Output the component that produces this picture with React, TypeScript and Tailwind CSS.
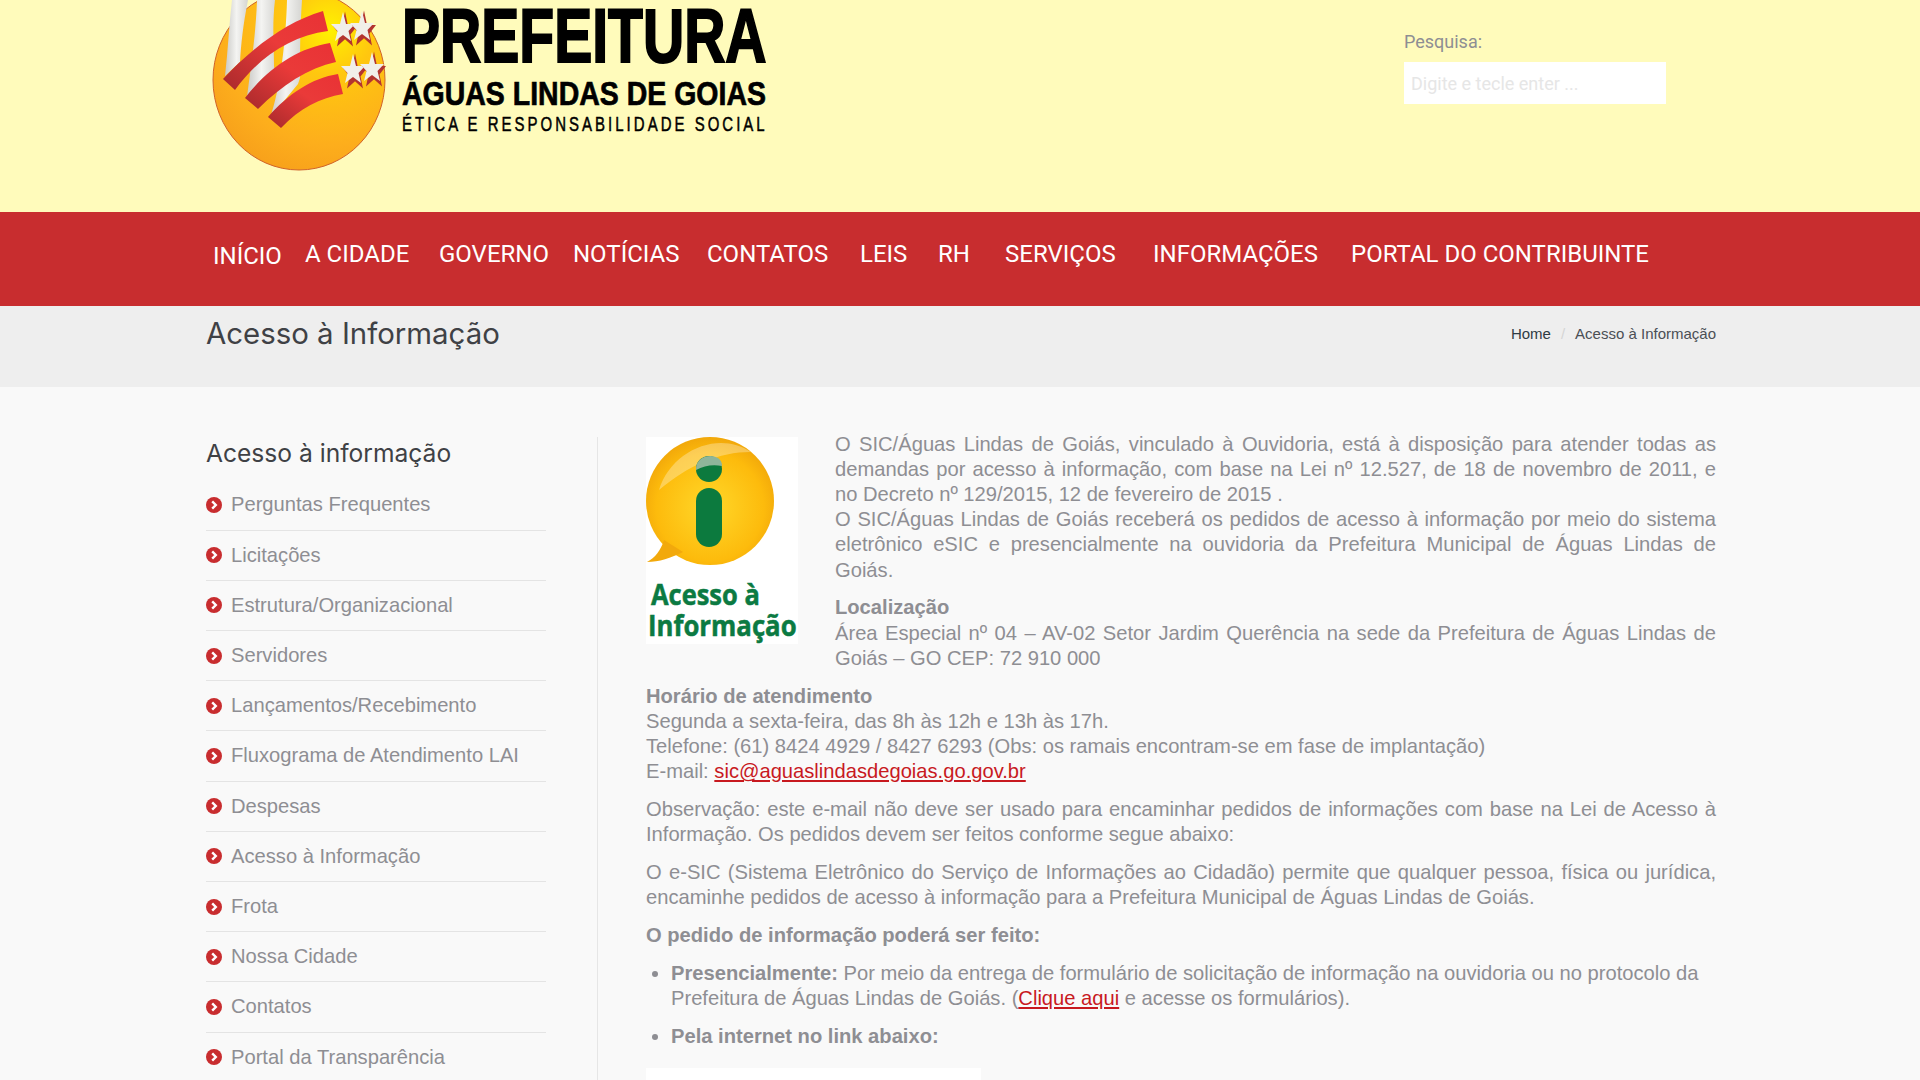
const NAV_ITEMS = [
  { label: 'INÍCIO', className: 'w-[92px] mt-[2px]' },
  { label: 'A CIDADE', className: 'w-[134px]' },
  { label: 'GOVERNO', className: 'w-[134px]' },
  { label: 'NOTÍCIAS', className: 'w-[134px]' },
  { label: 'CONTATOS', className: 'w-[153px]' },
  { label: 'LEIS', className: 'w-[78px]' },
  { label: 'RH', className: 'w-[67px]' },
  { label: 'SERVIÇOS', className: 'w-[148px]' },
  { label: 'INFORMAÇÕES', className: 'w-[198px]' },
  { label: 'PORTAL DO CONTRIBUINTE', className: '' },
];

const SIDE_ITEMS = [
  'Perguntas Frequentes',
  'Licitações',
  'Estrutura/Organizacional',
  'Servidores',
  'Lançamentos/Recebimento',
  'Fluxograma de Atendimento LAI',
  'Despesas',
  'Acesso à Informação',
  'Frota',
  'Nossa Cidade',
  'Contatos',
  'Portal da Transparência',
];

function Star({ x, y }: { x: number; y: number }) {
  const points = '0,-17 3,-5 12,-5 5.5,2 8,12 0,6 -8,12 -5.5,2 -12,-5 -3,-5';
  return (
    <g transform={`translate(${x} ${y})`}>
      <polygon points={points} fill="#b3342f" transform="translate(2 3) scale(1 1.2)" />
      <polygon points={points} fill="#f1efe9" />
    </g>
  );
}

function Logo() {
  return (
    <svg width="580" height="180" viewBox="200 0 580 180" className="block">
      <defs>
        <radialGradient id="ball" cx="0.68" cy="0.22" r="0.85">
          <stop offset="0" stopColor="#fff200" />
          <stop offset="0.3" stopColor="#ffc70f" />
          <stop offset="0.75" stopColor="#fdae1c" />
          <stop offset="1" stopColor="#f7a01b" />
        </radialGradient>
        <linearGradient id="band" x1="0" y1="1" x2="1" y2="0">
          <stop offset="0" stopColor="#a82a2c" />
          <stop offset="0.55" stopColor="#ea3a39" />
          <stop offset="1" stopColor="#e93235" />
        </linearGradient>
        <linearGradient id="silver" x1="0" y1="0" x2="1" y2="0">
          <stop offset="0" stopColor="#c9c9c6" />
          <stop offset="0.5" stopColor="#f4f4f2" />
          <stop offset="1" stopColor="#d5d5d2" />
        </linearGradient>
      </defs>
      <ellipse cx="299" cy="80" rx="86" ry="90" fill="url(#ball)" stroke="#d0632a" strokeWidth="1" />
      <path d="M225 76 C228 50 229 25 232 0 L248 0 C243 25 241 45 240 62 Z" fill="url(#silver)" />
      <path d="M247 97 C252 60 256 30 257 0 L275 0 C272 25 274 45 274 66 L276 80 Z" fill="url(#silver)" />
      <path d="M270 118 C280 90 286 40 287 0 L302 0 C300 30 300 55 300 78 L298 84 Z" fill="url(#silver)" />
      <path d="M223 79 C250 50 285 22 323 11 L328 31 C290 36 258 58 235 90 Z" fill="url(#band)" />
      <path d="M245 98 C268 68 298 48 330 43 L336 62 C308 68 282 85 258 109 Z" fill="url(#band)" />
      <path d="M268 117 C288 94 312 78 338 74 L343 94 C320 98 300 108 281 128 Z" fill="url(#band)" />
      <Star x={343} y={29} />
      <Star x={362} y={28} />
      <Star x={353} y={71} />
      <Star x={372} y={69} />
      <g fill="#000" stroke="#000" fontFamily="'Liberation Sans', sans-serif" fontWeight="700">
        <text transform="translate(402 62) scale(0.751 1)" fontSize="76" strokeWidth="2">
          PREFEITURA
        </text>
        <text transform="translate(402 105) scale(0.838 1)" fontSize="34" strokeWidth="0.7">
          ÁGUAS LINDAS DE GOIAS
        </text>
        <text transform="translate(402 131) scale(0.72 1)" fontSize="20.8" letterSpacing="4.2" fontWeight="400" strokeWidth="0.5">
          ÉTICA E RESPONSABILIDADE SOCIAL
        </text>
      </g>
    </svg>
  );
}

function InfoBadge() {
  return (
    <svg width="152" height="207" viewBox="647 437 152 207" className="block bg-white">
      <defs>
        <radialGradient id="bubble" cx="0.5" cy="0.55" r="0.6">
          <stop offset="0" stopColor="#ffd82a" />
          <stop offset="0.7" stopColor="#fdbb0c" />
          <stop offset="1" stopColor="#eda009" />
        </radialGradient>
      </defs>
      <circle cx="711" cy="501" r="64" fill="url(#bubble)" />
      <path d="M665 540 C662 550 656 558 648 562 C660 562 672 558 684 552 Z" fill="#f2a90c" />
      <path d="M660 490 C672 450 720 430 752 452 C720 452 690 465 660 490 Z" fill="#fff" opacity="0.3" />
      <circle cx="710" cy="469" r="13" fill="#0c7a3e" />
      <path d="M697 470 C696 452 724 452 723 466 C713 464 705 466 697 470 Z" fill="#8fb59a" />
      <rect x="697" y="488" width="26" height="59" rx="13" fill="#0c7a3e" />
      <g fill="#0b7a42" stroke="#0b7a42" strokeWidth="0.5" fontFamily="'Open Sans', sans-serif" fontWeight="700">
        <text transform="translate(652 605) scale(0.91 1)" fontSize="28">
          Acesso à
        </text>
        <text transform="translate(649 636) scale(0.92 1)" fontSize="28">
          Informação
        </text>
      </g>
    </svg>
  );
}

function ChevronBullet() {
  return (
    <svg width="16" height="16" viewBox="0 0 16 16" className="shrink-0">
      <circle cx="8" cy="8" r="8" fill="#c82d2f" />
      <path d="M6.2 4.4 L9.8 8 L6.2 11.6" fill="none" stroke="#fff" strokeWidth="2.4" />
    </svg>
  );
}

export default function App() {
  return (
    <div className="h-[1080px] overflow-hidden bg-[#f9f9f9] font-['Liberation_Sans',sans-serif] text-[20.16px] leading-[25.2px] text-[#8e8e93]">
      {/* header */}
      <header className="h-[212px] bg-[#fffbbb]">
        <div className="flex items-start pl-[200px]">
          <Logo />
          <div className="ml-[624px] pt-[29px] font-['Roboto',sans-serif] text-[18px]">
            <label className="block leading-[26px]">Pesquisa:</label>
            <input
              type="text"
              placeholder="Digite e tecle enter ..."
              className="mt-[7px] block h-[42px] w-[262px] bg-white px-[7px] text-[18px] placeholder-[#e6e6e6] outline-none"
            />
          </div>
        </div>
      </header>

      {/* nav */}
      <nav className="h-[94px] bg-[#c82d2f]">
        <ul className="flex pl-[213px] pt-[27px] font-['Roboto',sans-serif] text-[24px] leading-[30px] text-white">
          {NAV_ITEMS.map((item) => (
            <li key={item.label} className={item.className}>
              {item.label}
            </li>
          ))}
        </ul>
      </nav>

      {/* title band */}
      <div className="h-[81px] bg-[#eeeeee]">
        <div className="ml-[206px] flex w-[1510px] items-center justify-between pt-[10px]">
          <h1 className="font-['Inter',sans-serif] text-[29.4px] leading-[36px] text-[#3f4145]">Acesso à Informação</h1>
          <div className="flex items-center text-[15px] text-[#4b4f55]">
            <span className="text-[#2f3b44]">Home</span>
            <span className="mx-[10px] text-[#d5d5d5]">/</span>
            <span>Acesso à Informação</span>
          </div>
        </div>
      </div>

      {/* main */}
      <div className="ml-[206px] flex w-[1510px] pt-[50px]">
        <aside className="w-[340px] shrink-0">
          <h2 className="h-[43.5px] font-['Inter',sans-serif] text-[24.6px] leading-[32px] text-[#3f4145]">Acesso à informação</h2>
          <ul>
            {SIDE_ITEMS.map((item) => (
              <li key={item} className="flex h-[50.2px] items-center gap-[9px] border-b border-[#e4e4e4]">
                <ChevronBullet />
                <span>{item}</span>
              </li>
            ))}
          </ul>
        </aside>

        <div className="ml-[51px] flex-1 border-l border-[#e6e6e6] pl-[48px]">
          <div className="-mt-[5.5px] text-justify">
            <div className="float-left mb-[12px] mr-[37px] mt-[5.5px]">
              <InfoBadge />
            </div>
            <p>
              O SIC/Águas Lindas de Goiás, vinculado à Ouvidoria, está à disposição para atender todas as demandas por
              acesso à informação, com base na Lei nº 12.527, de 18 de novembro de 2011, e no Decreto nº 129/2015, 12 de
              fevereiro de 2015 .
            </p>
            <p className="mb-[12.6px]">
              O SIC/Águas Lindas de Goiás receberá os pedidos de acesso à informação por meio do sistema eletrônico eSIC e
              presencialmente na ouvidoria da Prefeitura Municipal de Águas Lindas de Goiás.
            </p>
            <p className="mb-[12.6px]">
              <strong>Localização</strong>
              <br />
              Área Especial nº 04 – AV-02 Setor Jardim Querência na sede da Prefeitura de Águas Lindas de Goiás – GO CEP: 72
              910 000
            </p>
            <p className="clear-both mb-[12.6px] text-left">
              <strong>Horário de atendimento</strong>
              <br />
              Segunda a sexta-feira, das 8h às 12h e 13h às 17h.
              <br />
              Telefone: (61) 8424 4929 / 8427 6293 (Obs: os ramais encontram-se em fase de implantação)
              <br />
              E-mail: <a className="text-[#c8191f] underline">sic@aguaslindasdegoias.go.gov.br</a>
            </p>
            <p className="mb-[12.6px]">
              Observação: este e-mail não deve ser usado para encaminhar pedidos de informações com base na Lei de Acesso à
              Informação. Os pedidos devem ser feitos conforme segue abaixo:
            </p>
            <p className="mb-[12.6px]">
              O e-SIC (Sistema Eletrônico do Serviço de Informações ao Cidadão) permite que qualquer pessoa, física ou
              jurídica, encaminhe pedidos de acesso à informação para a Prefeitura Municipal de Águas Lindas de Goiás.
            </p>
            <p className="mb-[12.6px]">
              <strong>O pedido de informação poderá ser feito:</strong>
            </p>
            <ul className="list-disc pl-[25px] text-left">
              <li className="mb-[12.6px]">
                <strong>Presencialmente:</strong> Por meio da entrega de formulário de solicitação de informação na ouvidoria
                ou no protocolo da Prefeitura de Águas Lindas de Goiás. (<a className="text-[#c8191f] underline">Clique aqui</a>{' '}
                e acesse os formulários).
              </li>
              <li className="mb-[19px]">
                <strong>Pela internet no link abaixo:</strong>
              </li>
            </ul>
            <div className="h-[60px] w-[335px] bg-white" />
          </div>
        </div>
      </div>
    </div>
  );
}
